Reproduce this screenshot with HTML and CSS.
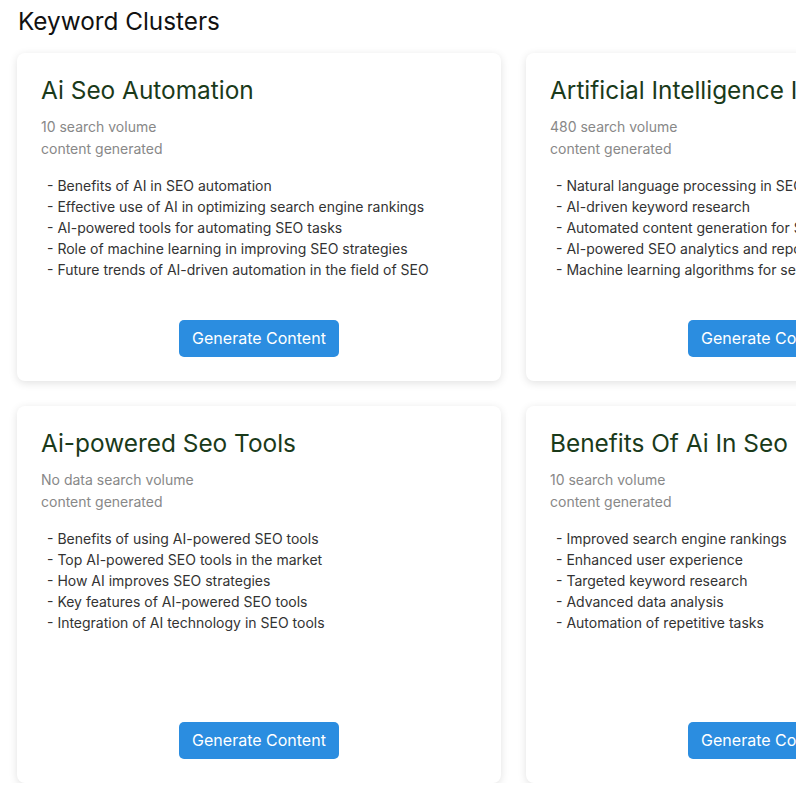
FILE: index.html
```html
<!DOCTYPE html>
<html lang="en">
<head>
<meta charset="utf-8">
<title>Keyword Clusters</title>
<link rel="stylesheet" href="styles.css">
</head>
<body>
<main class="page">
  <h1 class="page-title">Keyword Clusters</h1>
  <section class="cluster-grid">
    <article class="card">
      <h2 class="card-title">Ai Seo Automation</h2>
      <p class="meta">10 search volume</p>
      <p class="meta">content generated</p>
      <ul class="topics">
        <li>- Benefits of AI in SEO automation</li>
        <li>- Effective use of AI in optimizing search engine rankings</li>
        <li>- AI-powered tools for automating SEO tasks</li>
        <li>- Role of machine learning in improving SEO strategies</li>
        <li>- Future trends of AI-driven automation in the field of SEO</li>
      </ul>
      <button class="btn">Generate Content</button>
    </article>
    <article class="card">
      <h2 class="card-title">Artificial Intelligence In Seo</h2>
      <p class="meta">480 search volume</p>
      <p class="meta">content generated</p>
      <ul class="topics">
        <li>- Natural language processing in SEO</li>
        <li>- AI-driven keyword research</li>
        <li>- Automated content generation for SEO</li>
        <li>- AI-powered SEO analytics and reporting</li>
        <li>- Machine learning algorithms for search ranking</li>
      </ul>
      <button class="btn">Generate Content</button>
    </article>
    <article class="card">
      <h2 class="card-title">Ai-powered Seo Tools</h2>
      <p class="meta">No data search volume</p>
      <p class="meta">content generated</p>
      <ul class="topics">
        <li>- Benefits of using AI-powered SEO tools</li>
        <li>- Top AI-powered SEO tools in the market</li>
        <li>- How AI improves SEO strategies</li>
        <li>- Key features of AI-powered SEO tools</li>
        <li>- Integration of AI technology in SEO tools</li>
      </ul>
      <button class="btn">Generate Content</button>
    </article>
    <article class="card">
      <h2 class="card-title">Benefits Of Ai In Seo</h2>
      <p class="meta">10 search volume</p>
      <p class="meta">content generated</p>
      <ul class="topics">
        <li>- Improved search engine rankings</li>
        <li>- Enhanced user experience</li>
        <li>- Targeted keyword research</li>
        <li>- Advanced data analysis</li>
        <li>- Automation of repetitive tasks</li>
      </ul>
      <button class="btn">Generate Content</button>
    </article>
  </section>
</main>
</body>
</html>
```
FILE: styles.css
```css
html, body {
  margin: 0;
  padding: 0;
  background: #ffffff;
  overflow: hidden;
}

body {
  font-family: Inter, "Noto Sans", sans-serif;
  color: #333333;
}

.page {
  padding: 7px 17px 0 17px;
}

.page-title {
  margin: 0 0 17px 1px;
  font-size: 24.3px;
  font-weight: 400;
  line-height: 29px;
  color: #111111;
}

.cluster-grid {
  display: grid;
  grid-template-columns: repeat(2, 484px);
  grid-template-rows: 328px 377px;
  gap: 25px;
}

.card {
  display: flex;
  flex-direction: column;
  background: #ffffff;
  border-radius: 8px;
  box-shadow: 0 2px 8px rgba(0, 0, 0, 0.12);
  padding: 23px 24px 24px 24px;
  box-sizing: border-box;
  overflow: hidden;
}

.card-title {
  margin: 0 0 11px 0;
  font-size: 24.4px;
  font-weight: 400;
  line-height: 29px;
  color: #1a3a1a;
  white-space: nowrap;
}

.meta {
  margin: 0;
  font-size: 14px;
  line-height: 22px;
  color: #888888;
}

.topics {
  list-style: none;
  margin: 15px 0 0 0;
  padding: 0 0 0 6px;
  font-size: 14px;
  line-height: 21px;
  color: #333333;
}

.topics li {
  white-space: nowrap;
}

.btn {
  margin-top: auto;
  align-self: center;
  font-family: Inter, "Noto Sans", sans-serif;
  font-size: 16px;
  line-height: 21px;
  padding: 8px 13.5px;
  color: #ffffff;
  background: #2b8de0;
  border: none;
  border-radius: 5px;
  cursor: pointer;
}
```
